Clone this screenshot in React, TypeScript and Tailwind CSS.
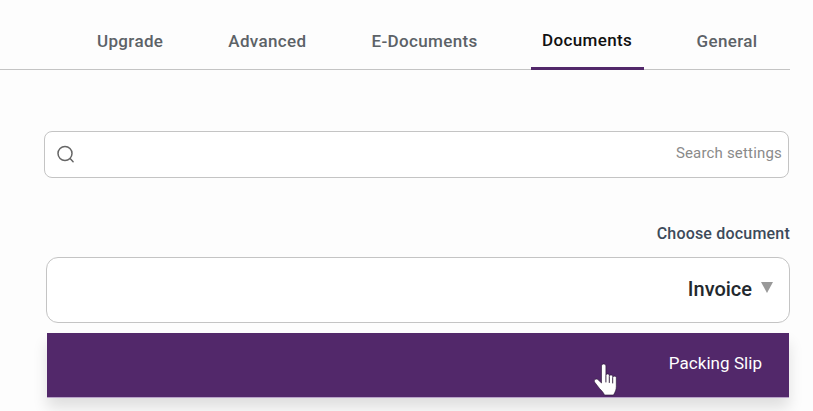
const tabs = ['Upgrade', 'Advanced', 'E-Documents', 'Documents', 'General'];

function HandCursor() {
  return (
    <svg width="26" height="34" viewBox="0 0 26 34" className="absolute left-[547px] top-[30px]">
      <path
        d="M7.500 3c0-2.800 4.400-2.800 4.400 0v9.500c0-2 3.400-2 3.400 0v1c0-2 3.400-2 3.400 0v1c0-1.800 3.600-1.800 3.600 0v9c0 3-1 5.500-2.800 8.500H10.500c-1-2.500-3-4.500-5-6.500L.9 19.500c-1.800-2.200.8-4.400 3-2.900l3.600 3.400V3z"
        fill="#fff"
        stroke="#241030"
        strokeWidth="0.6"
        strokeLinejoin="round"
      />
      <path d="M11.900 13v6M15.300 14v5.500M18.700 15v5" fill="none" stroke="#241030" strokeWidth="0.9" strokeLinecap="round" />
    </svg>
  );
}

export default function App() {
  return (
    <div className="h-[411px] w-[813px] overflow-hidden bg-[#fdfdfd] font-['Roboto',sans-serif]">
      <div className="w-[790px]">
        <div className="flex h-[70px] justify-end gap-[41px] border-b border-[#c4c4c4] pr-[20.5px]">
          {tabs.map((tab) => (
            <div
              key={tab}
              className={
                tab === 'Documents'
                  ? 'flex h-[70px] items-center border-b-[3px] border-[#52286a] px-[11.5px] pt-[15px] text-[17px] font-medium tracking-[0.35px] text-[#111111]'
                  : 'flex h-[69px] items-center px-3 pt-[15px] text-[17px] font-medium tracking-[0.35px] text-[#5c6267]'
              }
            >
              {tab}
            </div>
          ))}
        </div>

        <div className="ml-[44px] mt-[61px] flex h-[47px] w-[745px] items-center justify-between rounded-lg border border-[#c4c4c4] bg-white pl-3 pr-[6px]">
          <svg width="19" height="19" viewBox="0 0 19 19" fill="none" stroke="#666" strokeWidth="1.5" strokeLinecap="round">
            <circle cx="8" cy="8.500" r="7" />
            <path d="M13.100 13.600l3 3.200" />
          </svg>
          <span className="mb-[2px] text-[15px] tracking-[0.18px] text-[#8a8a8a]">Search settings</span>
        </div>

        <div className="mt-[46px] text-right text-[16px] font-medium leading-5 tracking-[0.2px] text-[#3c4a5a]">Choose document</div>

        <div className="ml-[46px] mt-[13px] flex h-[66px] w-[744px] items-center justify-end gap-[9px] rounded-xl border border-[#c4c4c4] bg-white pr-[16px]">
          <span className="mb-[3px] text-[20px] font-medium text-[#23282d]">Invoice</span>
          <span className="mb-[6px] h-0 w-0 border-x-[6.500px] border-t-[11px] border-x-transparent border-t-[#999999]" />
        </div>

        <div className="relative ml-[47px] mt-[10px] flex h-[65px] w-[742px] items-center justify-end border-b border-[#b9a3c9] bg-[#52286a] pb-[3px] pr-[27px] shadow-[0_10px_14px_rgba(0,0,0,0.12)]">
          <span className="text-[17px] tracking-[0.05px] text-white">Packing Slip</span>
          <HandCursor />
        </div>
      </div>
    </div>
  );
}
